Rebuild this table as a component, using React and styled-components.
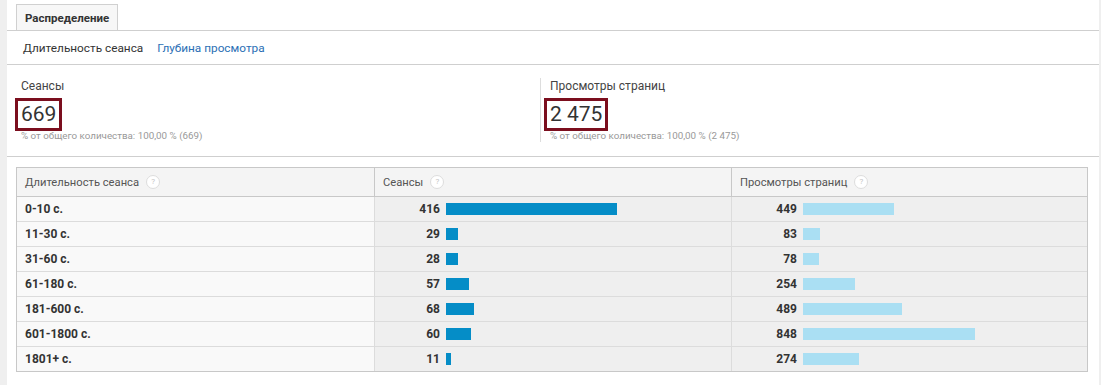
import React from 'react';
import styled, { createGlobalStyle } from 'styled-components';

const GlobalStyle = createGlobalStyle`
  html, body {
    margin: 0;
    padding: 0;
    background: #efefef;
    font-family: Roboto, 'Liberation Sans', sans-serif;
    color: #333;
  }
`;

const ROWS = [
  { label: '0-10 с.', sessions: 416, views: 449 },
  { label: '11-30 с.', sessions: 29, views: 83 },
  { label: '31-60 с.', sessions: 28, views: 78 },
  { label: '61-180 с.', sessions: 57, views: 254 },
  { label: '181-600 с.', sessions: 68, views: 489 },
  { label: '601-1800 с.', sessions: 60, views: 848 },
  { label: '1801+ с.', sessions: 11, views: 274 },
];

const Page = styled.div`
  margin: 0 2px 0 7px;
  height: 385px;
  background: #fff;
  overflow: hidden;
`;

const TabBar = styled.div`
  display: flex;
  height: 31px;
  padding-left: 9px;
  border-bottom: 1px solid #cfcfcf;
  box-sizing: border-box;
  align-items: flex-end;
`;

const Tab = styled.div`
  height: 26px;
  padding: 0 8px;
  display: flex;
  align-items: center;
  font-size: 11.5px;
  font-weight: 700;
  color: #333;
  background: #f7f7f7;
  border: 1px solid #d0d0d0;
  border-bottom: none;
  box-sizing: border-box;
`;

const SubNav = styled.div`
  display: flex;
  gap: 14px;
  height: 34px;
  padding-left: 16px;
  align-items: center;
  border-bottom: 1px solid #cfcfcf;
  box-sizing: border-box;
  font-size: 11.8px;
`;

const NavItem = styled.span`
  color: ${p => (p.active ? '#333' : '#2b6fb5')};
  cursor: ${p => (p.active ? 'default' : 'pointer')};
`;

const Metrics = styled.div`
  display: grid;
  grid-template-columns: 533px 1fr;
  height: 92px;
  padding-top: 13px;
  box-sizing: border-box;
  border-bottom: 1px solid #cfcfcf;
`;

const Metric = styled.div`
  height: 64px;
  padding-left: ${p => (p.divided ? '9px' : '14px')};
  border-left: ${p => (p.divided ? '1px solid #ddd' : 'none')};
`;

const MetricLabel = styled.div`
  font-size: 12px;
  line-height: 14px;
  color: #444;
  margin-top: 1px;
`;

const MetricValue = styled.div`
  display: inline-block;
  margin: 5px 0 0 -6px;
  padding: 0 3px;
  border: 3px solid #7b0e1e;
  font-size: 21px;
  line-height: 27px;
  color: #333;
`;

const MetricNote = styled.div`
  font-size: 9.8px;
  line-height: 11px;
  color: #999;
  margin-top: -1px;
`;

const Table = styled.div`
  margin: 10px 11px 0 9px;
  border: 1px solid #c8c8c8;
  display: grid;
  grid-template-columns: 357px 357px 1fr;
`;

const HeadCell = styled.div`
  display: flex;
  align-items: center;
  gap: 7px;
  height: 28px;
  padding-left: 8px;
  background: #f4f4f4;
  font-size: 11.2px;
  color: #555;
  border-bottom: 1px solid #c8c8c8;
  border-left: ${p => (p.first ? 'none' : '1px solid #c8c8c8')};
`;

const Help = styled.span`
  width: 12px;
  height: 12px;
  border: 1px solid #ddd;
  border-radius: 50%;
  background: #fff;
  color: #c4c4c4;
  font-size: 8px;
  line-height: 12px;
  text-align: center;
`;

const LabelCell = styled.div`
  height: 24px;
  display: flex;
  align-items: center;
  padding-left: 8px;
  background: #f9f9f9;
  font-size: 12px;
  font-weight: 700;
  color: #333;
  border-top: ${p => (p.first ? 'none' : '1px solid #dcdcdc')};
`;

const BarCell = styled.div`
  height: 24px;
  display: flex;
  align-items: center;
  background: #efefef;
  border-left: 1px solid #dcdcdc;
  border-top: ${p => (p.first ? 'none' : '1px solid #dcdcdc')};
`;

const Num = styled.span`
  width: 65px;
  text-align: right;
  font-size: 12px;
  font-weight: 700;
  color: #333;
`;

const Bar = styled.span`
  height: 12px;
  margin-left: 6px;
  background: ${p => p.color};
`;

const Head = ({ children, first }) => (
  <HeadCell first={first}>
    {children}
    <Help>?</Help>
  </HeadCell>
);

export default function App() {
  return (
    <>
      <GlobalStyle />
      <Page>
        <TabBar>
          <Tab>Распределение</Tab>
        </TabBar>
        <SubNav>
          <NavItem active>Длительность сеанса</NavItem>
          <NavItem>Глубина просмотра</NavItem>
        </SubNav>
        <Metrics>
          <Metric>
            <MetricLabel>Сеансы</MetricLabel>
            <MetricValue>669</MetricValue>
            <MetricNote>% от общего количества: 100,00 % (669)</MetricNote>
          </Metric>
          <Metric divided>
            <MetricLabel>Просмотры страниц</MetricLabel>
            <MetricValue>2 475</MetricValue>
            <MetricNote>% от общего количества: 100,00 % (2 475)</MetricNote>
          </Metric>
        </Metrics>
        <Table>
          <Head first>Длительность сеанса</Head>
          <Head>Сеансы</Head>
          <Head>Просмотры страниц</Head>
          {ROWS.map((r, i) => (
            <React.Fragment key={r.label}>
              <LabelCell first={i === 0}>{r.label}</LabelCell>
              <BarCell first={i === 0}>
                <Num>{r.sessions}</Num>
                <Bar color="#058dc7" style={{ width: Math.round(r.sessions * 0.411) }} />
              </BarCell>
              <BarCell first={i === 0}>
                <Num>{r.views}</Num>
                <Bar color="#aadff3" style={{ width: Math.round(r.views * 0.2028) }} />
              </BarCell>
            </React.Fragment>
          ))}
        </Table>
      </Page>
    </>
  );
}
